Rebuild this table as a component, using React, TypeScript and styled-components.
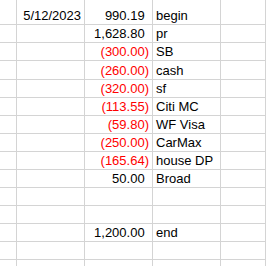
import React from 'react';
import styled, { createGlobalStyle } from 'styled-components';

interface Entry {
  date?: string;
  amount?: number;
  label?: string;
  height?: number;
}

const entries: Entry[] = [
  { date: '5/12/2023', amount: 990.19, label: 'begin', height: 25 },
  { amount: 1628.8, label: 'pr' },
  { amount: -300, label: 'SB' },
  { amount: -260, label: 'cash', height: 19 },
  { amount: -320, label: 'sf' },
  { amount: -113.55, label: 'Citi MC' },
  { amount: -59.8, label: 'WF Visa' },
  { amount: -250, label: 'CarMax' },
  { amount: -165.64, label: 'house DP' },
  { amount: 50, label: 'Broad' },
  {},
  {},
  { amount: 1200, label: 'end' },
  {},
  {},
];

const formatAmount = (value: number) =>
  Math.abs(value).toLocaleString('en-US', {
    minimumFractionDigits: 2,
    maximumFractionDigits: 2,
  });

const Amount = ({ value }: { value: number }) => {
  if (value < 0) {
    return <Negative>({formatAmount(value)})</Negative>;
  }
  return (
    <span>
      {formatAmount(value)}
      <Paren>)</Paren>
    </span>
  );
};

const App = () => (
  <>
    <GlobalStyle />
    <Sheet>
      {entries.map((entry, i) => (
        <Row key={i} $h={entry.height ?? 18}>
          <Cell />
          <Cell $align="right">{entry.date}</Cell>
          <Cell $align="right">
            {entry.amount !== undefined && <Amount value={entry.amount} />}
          </Cell>
          <Cell>{entry.label}</Cell>
          <Cell />
        </Row>
      ))}
    </Sheet>
  </>
);

export default App;

const GlobalStyle = createGlobalStyle`
  html, body {
    margin: 0;
    padding: 0;
    background: #ffffff;
    overflow: hidden;
  }
`;

const Sheet = styled.div`
  display: flex;
  flex-direction: column;
  width: 266px;
  height: 266px;
  overflow: hidden;
  font-family: 'Liberation Sans', Arial, sans-serif;
  font-size: 13px;
  color: #000000;
`;

const Row = styled.div<{ $h: number }>`
  display: grid;
  grid-template-columns: 17px 68px 68px 68px 1fr;
  flex: 0 0 ${(p) => p.$h}px;
  height: ${(p) => p.$h}px;
`;

const Cell = styled.div<{ $align?: 'left' | 'right' }>`
  box-sizing: border-box;
  display: flex;
  align-items: flex-end;
  justify-content: ${(p) => (p.$align === 'right' ? 'flex-end' : 'flex-start')};
  padding: 0 3px 1px 3px;
  border-right: 1px solid #d4d4d4;
  border-bottom: 1px solid #d4d4d4;
  line-height: 15px;
  white-space: nowrap;
  overflow: hidden;
`;

const Negative = styled.span`
  color: #ff0000;
`;

const Paren = styled.span`
  visibility: hidden;
`;
